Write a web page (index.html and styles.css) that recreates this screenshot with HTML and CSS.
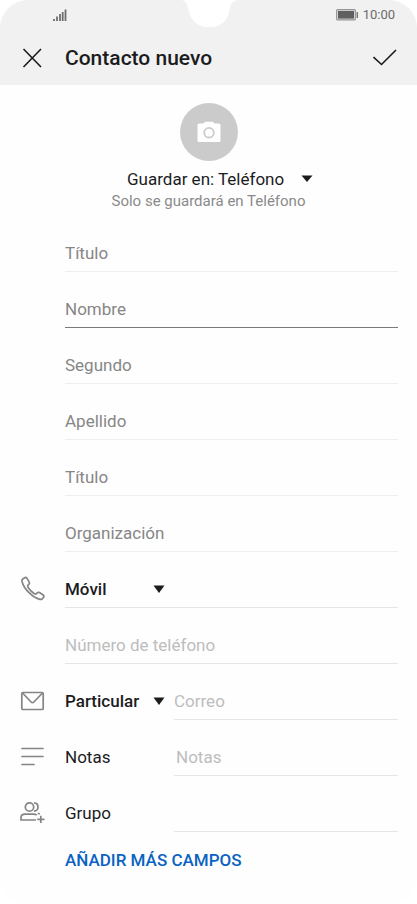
FILE: index.html
```html
<!DOCTYPE html>
<html lang="es">
<head>
<meta charset="utf-8">
<meta name="viewport" content="width=device-width, initial-scale=1">
<title>Contacto nuevo</title>
<link rel="stylesheet" href="styles.css">
</head>
<body>
<form class="screen">
  <div class="top">
    <svg class="notch" width="66" height="28" viewBox="0 0 66 28" aria-hidden="true"><path d="M5 0C9 0 11 3 12 8C14 19 20 27.300 33.500 27.300S52 19 54 8C55 3 58 0 62 0Z"/></svg>
    <div class="status">
      <svg width="14" height="14" viewBox="0 0 14 14" aria-label="Señal" role="img"><path d="M1 11v2M4 8.500V13M7 6v7M9.700 4v9M12.500 1.500V13" stroke="#6e6e6e" stroke-width="1.800"/></svg>
      <div class="power">
        <svg width="23" height="12" viewBox="0 0 23 12" aria-label="Batería" role="img"><rect x=".6" y=".6" width="18.800" height="10.300" rx="1" fill="#ddd" stroke="#969696" stroke-width="1.100"/><rect x="2" y="2" width="16" height="7.600" fill="#5f5f5f"/><path d="M21.300 3v6" stroke="#777" stroke-width="1.500"/></svg>
        <span>10:00</span>
      </div>
    </div>
    <header class="bar">
      <button type="button" class="icon-button" aria-label="Cerrar"><svg width="20" height="20" viewBox="0 0 20 20"><path d="M1.500 1l17.500 18M19 1L1.500 19"/></svg></button>
      <h1>Contacto nuevo</h1>
      <button type="submit" class="icon-button" aria-label="Guardar"><svg width="24" height="18" viewBox="0 0 24 18"><path d="M.5 8l8 7.500L23 1"/></svg></button>
    </header>
  </div>

  <section class="account">
    <button type="button" class="photo" aria-label="Añadir foto">
      <svg width="24" height="22" viewBox="0 0 24 22"><path fill="#fff" fill-rule="evenodd" d="M2 2.500H6.500L8 .8H16L17.500 2.500H22Q23.500 2.500 23.500 4V19.500Q23.500 21 22 21H2Q.5 21 .5 19.500V4Q.5 2.500 2 2.500ZM12 6a5.700 5.700 0 1 0 0 11.400A5.700 5.700 0 0 0 12 6ZM12 7.800a3.900 3.900 0 1 1 0 7.800a3.900 3.900 0 0 1 0-7.800Z"/></svg>
    </button>
    <span class="picker destination">
      <select aria-label="Guardar en"><option>Guardar en: Teléfono</option></select>
      <svg class="arrow" width="12" height="8" viewBox="0 0 12 8"><path d="M.5 .5h11L6 7Z"/></svg>
    </span>
    <p>Solo se guardará en Teléfono</p>
  </section>

  <div class="fields">
    <div class="row"><input class="field line faint" aria-label="Título" placeholder="Título"></div>
    <div class="row"><input class="field line active" aria-label="Nombre" placeholder="Nombre"></div>
    <div class="row"><input class="field line faint" aria-label="Segundo" placeholder="Segundo"></div>
    <div class="row"><input class="field line faint" aria-label="Apellido" placeholder="Apellido"></div>
    <div class="row"><input class="field line faint" aria-label="Título posterior" placeholder="Título"></div>
    <div class="row"><input class="field line faint" aria-label="Organización" placeholder="Organización"></div>
    <div class="row">
      <svg class="row-icon" width="26" height="26" viewBox="0 0 26 26"><path d="M2.600 3.200L4.700 1.700Q6 1 6.900 2.200L9.200 6.200Q9.800 7.400 8.800 8.400L7.800 9.400Q7.400 10.400 8.300 11.700Q10.700 15.300 14.100 17.500Q15.400 18.300 16.400 17.700L17.500 16.700Q18.400 16 19.500 16.600L23.200 19Q24.400 19.900 23.600 21.200L22.200 22.800Q21.300 23.700 20 23.400Q14.500 22 9 16.700Q3.500 11.300 2 5.500Q1.700 4 2.600 3.200Z"/></svg>
      <div class="line full"><span class="picker type">
        <select aria-label="Tipo de teléfono"><option>Móvil</option></select>
        <svg class="arrow" width="12" height="8" viewBox="0 0 12 8"><path d="M.5 .5h11L6 8Z"/></svg>
      </span></div>
    </div>
    <div class="row"><input type="tel" class="field line light" aria-label="Número de teléfono" placeholder="Número de teléfono"></div>
    <div class="row">
      <svg class="row-icon" width="26" height="26" viewBox="0 0 26 26"><rect x="1.800" y="4.500" width="21.400" height="17" rx="1"/><path d="M2.500 5l8.600 9q1.400 1.500 2.800 0l8.600-9"/></svg>
      <span class="picker type side">
        <select aria-label="Tipo de correo"><option>Particular</option></select>
        <svg class="arrow" width="12" height="8" viewBox="0 0 12 8"><path d="M.5 .5h11L6 8Z"/></svg>
      </span>
      <input type="email" class="field line light" aria-label="Correo" placeholder="Correo">
    </div>
    <div class="row">
      <svg class="row-icon" width="26" height="26" viewBox="0 0 26 26"><path d="M2 4.500h21M2 12.500h21M2 20.500h12" stroke-linecap="round"/></svg>
      <label class="side" for="notas">Notas</label>
      <input id="notas" class="field line light inset" placeholder="Notas">
    </div>
    <div class="row">
      <svg class="row-icon" width="26" height="26" viewBox="0 0 26 26"><circle cx="9.500" cy="7" r="4.200"/><path d="M14 2.900c5.300.2 5.300 8 0 8.200M16 20H1V17.800Q1 14.200 5 14.200h8.500q2 0 3.200 1M17.800 13.200l2 .8M20.800 15.800v7.200M17.200 19.400H24.500"/></svg>
      <label class="side" for="grupo">Grupo</label>
      <input id="grupo" class="field line light">
    </div>
  </div>
  <button type="button" class="more">AÑADIR MÁS CAMPOS</button>
</form>
</body>
</html>
```
FILE: styles.css
```css
* { box-sizing: border-box; }

body {
  margin: 0;
  background: #fff;
  color: #1c1c1e;
  font: 17px/24px Roboto, sans-serif;
}

.screen {
  min-height: 100vh;
  border-radius: 28px;
  background: #fefefe;
  overflow: hidden;
}

button, input, select {
  margin: 0;
  padding: 0;
  border: 0;
  border-radius: 0;
  outline: 0;
  background: none;
  color: inherit;
  font: inherit;
}

svg { display: block; flex: none; }

.top {
  position: relative;
  background: #f1f1f1;
}

.notch {
  position: absolute;
  top: 0;
  left: calc(50% - 33px);
  fill: #fff;
}

.status {
  display: flex;
  align-items: center;
  justify-content: space-between;
  height: 30px;
  padding: 0 22px 0 53px;
}

.power {
  display: flex;
  align-items: center;
  gap: 4px;
  color: #6a6a6a;
  font-size: 13px;
}

.bar {
  display: flex;
  align-items: center;
  height: 55px;
  padding: 0 20px 0 22px;
}

.bar h1 {
  flex: 1;
  margin: 0 0 0 23px;
  font-size: 21px;
  font-weight: 500;
}

.icon-button svg {
  fill: none;
  stroke: #1c1c1e;
  stroke-width: 1.6;
}

.account {
  display: flex;
  flex-direction: column;
  align-items: center;
  height: 131px;
  padding-top: 18px;
}

.photo {
  display: grid;
  place-items: center;
  width: 58px;
  height: 58px;
  border-radius: 50%;
  background: #cbcbcb;
}

.account p {
  margin: 0;
  color: #8a8a8a;
  font-size: 15px;
  line-height: 20px;
}

.picker {
  display: grid;
  grid-template-columns: 1fr 12px;
  align-items: center;
}

.picker select {
  grid-area: 1 / 1 / 2 / 3;
  appearance: none;
  width: 100%;
  height: 24px;
}

.picker .arrow {
  grid-area: 1 / 2;
  pointer-events: none;
  fill: #1c1c1e;
}

.destination {
  width: 186px;
  margin: 6px 0 0 23px;
}

.fields { padding: 0 19px; }

.row {
  display: grid;
  grid-template-columns: 46px 109px 1fr;
  align-items: end;
  height: 56px;
}

.row > .field, .full { grid-column: 2 / 4; }

.row-icon {
  grid-area: 1 / 1;
  margin: 0 0 6px 1px;
  fill: none;
  stroke: #858585;
  stroke-width: 1.7;
}

.side { grid-column: 2; padding-bottom: 7px; }
.row > .side + .field { grid-column: 3; }

.line { border-bottom: 1px solid #e6e6e6; }
.line.faint { border-color: #eee; }
.line.active { border-color: #7a7a7a; }

.field {
  display: block;
  width: 100%;
  height: 31px;
  padding-bottom: 6px;
}

.field.inset { padding-left: 2px; }

.field::placeholder { color: #868686; opacity: 1; }
.light::placeholder { color: #bdbdbd; }

.full { padding-bottom: 6px; }

.type {
  width: 100px;
  font-weight: 500;
}

.more {
  display: block;
  margin: 16px 0 0 65px;
  color: #0a63c2;
  font-weight: 500;
}
```
